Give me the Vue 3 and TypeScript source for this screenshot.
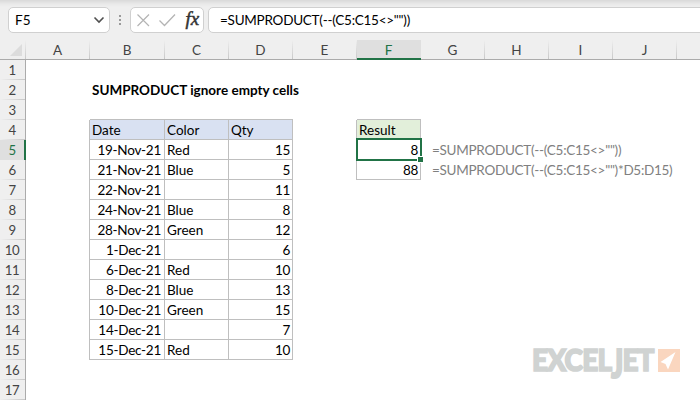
<script setup lang="ts">
interface Cell {
  text?: string
  kind: string
}

const columns: string[] = ['A', 'B', 'C', 'D', 'E', 'F', 'G', 'H', 'I', 'J', '']
const rowCount = 17
const activeColumn = 'F'
const activeRow = 5

const records: [string, string, number][] = [
  ['19-Nov-21', 'Red', 15],
  ['21-Nov-21', 'Blue', 5],
  ['22-Nov-21', '', 11],
  ['24-Nov-21', 'Blue', 8],
  ['28-Nov-21', 'Green', 12],
  ['1-Dec-21', '', 6],
  ['6-Dec-21', 'Red', 10],
  ['8-Dec-21', 'Blue', 13],
  ['10-Dec-21', 'Green', 15],
  ['14-Dec-21', '', 7],
  ['15-Dec-21', 'Red', 10],
]

const cells: Record<string, Cell> = {
  B2: { text: 'SUMPRODUCT ignore empty cells', kind: 'title' },
  A4: { kind: 'edge' },
  B3: { kind: 'rule' },
  C3: { kind: 'rule' },
  D3: { kind: 'rule' },
  F3: { kind: 'rule' },
  B4: { text: 'Date', kind: 'boxed head' },
  C4: { text: 'Color', kind: 'boxed head' },
  D4: { text: 'Qty', kind: 'boxed head' },
  E4: { kind: 'edge' },
  F4: { text: 'Result', kind: 'boxed head result' },
  E5: { kind: 'edge' },
  F5: { text: '8', kind: 'boxed number selected' },
  G5: { text: '=SUMPRODUCT(--(C5:C15<>""))', kind: 'note' },
  E6: { kind: 'edge' },
  F6: { text: '88', kind: 'boxed number' },
  G6: { text: '=SUMPRODUCT(--(C5:C15<>"")*D5:D15)', kind: 'note' },
}

records.forEach(([date, color, qty], i) => {
  const row = i + 5
  cells[`A${row}`] = { kind: 'edge' }
  cells[`B${row}`] = { text: date, kind: 'boxed date' }
  cells[`C${row}`] = { text: color, kind: 'boxed' }
  cells[`D${row}`] = { text: String(qty), kind: 'boxed number' }
})

const cellAt = (column: string, row: number): Cell => cells[`${column}${row}`] ?? { kind: '' }
</script>

<template>
  <div class="window">
    <div class="toolbar">
      <div class="field name-box">
        <span>F5</span>
        <svg width="12" height="8" viewBox="0 0 12 8"><path d="M1.500 1.500 6 6l4.500-4.500" fill="none" stroke="#505050" stroke-width="1.600" /></svg>
      </div>
      <div class="grip"><i></i><i></i><i></i></div>
      <div class="field actions">
        <svg width="72" height="24" viewBox="0 0 72 24">
          <path d="M6.500 6.500 18 18M18 6.500 6.500 18" fill="none" stroke="#b4b4b4" stroke-width="1.200" />
          <path d="M28.500 12.500 33.500 17.500 44 6.500" fill="none" stroke="#b4b4b4" stroke-width="1.300" />
          <text x="54.500" y="17" class="fx">fx</text>
        </svg>
      </div>
      <div class="field formula"><span>=SUMPRODUCT(--(C5:C15&lt;&gt;""))</span></div>
    </div>

    <div class="sheet">
      <div class="corner"><svg width="12" height="12" viewBox="0 0 12 12"><path d="M12 0v12H0z" fill="#dcdcdc" /></svg></div>
      <div v-for="column in columns" :key="column" class="column-label" :class="{ active: column === activeColumn }">{{ column }}</div>
      <template v-for="row in rowCount" :key="row">
        <div class="row-label" :class="{ active: row === activeRow }">{{ row }}</div>
        <div v-for="column in columns" :key="column" class="cell" :class="cellAt(column, row).kind">
          <span>{{ cellAt(column, row).text }}</span>
        </div>
      </template>
    </div>

    <div class="brand">
      <span class="wordmark">EXCEL<b>J</b>ET</span>
      <svg width="22" height="23" viewBox="0 0 22 23"><path d="M0 0h22v23H0z" fill="#fad6bf" /><path d="M17.500 3 2.500 13l5 2 2.500 5.500z" fill="#fff" /></svg>
    </div>
  </div>
</template>

<style>
body {
  margin: 0;
}
</style>

<style scoped>
.window {
  position: relative;
  width: 700px;
  height: 400px;
  overflow: hidden;
  background: #fff;
  font-family: Lato, "Liberation Sans", sans-serif;
  font-size: 13.500px;
  color: #000;
}
.toolbar {
  box-sizing: border-box;
  height: 40px;
  padding: 7px 0 7px 8px;
  display: flex;
  background: linear-gradient(#d9d9d9, #e9e9e9 4px, #efefef 7px);
}
.field {
  box-sizing: border-box;
  height: 26px;
  border: 1px solid #d0d0d0;
  border-radius: 5px;
  background: #fff;
  display: flex;
  align-items: center;
}
.name-box {
  width: 102px;
  padding: 0 4px 0 6px;
  justify-content: space-between;
}
.grip {
  width: 20px;
  display: flex;
  flex-direction: column;
  align-items: center;
  justify-content: center;
  gap: 2px;
}
.grip i {
  width: 2px;
  height: 2px;
  background: #9a9a9a;
}
.actions {
  width: 74px;
}
.fx {
  font: italic 19px "Liberation Serif", serif;
  fill: #333;
  stroke: #333;
  stroke-width: 0.500px;
}
.formula {
  flex: 1;
  margin: 0 -8px 0 4px;
  padding-left: 11px;
  white-space: pre;
  letter-spacing: -0.250px;
}
.sheet {
  display: grid;
  grid-template-columns: 26px 64px 75px repeat(9, 64px);
  grid-template-rows: 20px repeat(17, 20px);
}
.corner,
.column-label,
.row-label {
  box-sizing: border-box;
  background: #efefef;
  color: #444;
  display: flex;
  justify-content: center;
  align-items: center;
}
.corner {
  border-bottom: 1px solid #ababab;
  justify-content: flex-end;
  padding-right: 4px;
  background: linear-gradient(#efefef, #c8c8c8) right / 1px 100% no-repeat #efefef;
}
.column-label {
  border-bottom: 1px solid #ababab;
  padding-right: 1px;
  background: linear-gradient(#efefef, #c8c8c8) right / 1px 100% no-repeat #efefef;
}
.column-label.active {
  background: #dfdfdf;
  color: #217346;
  border-bottom: 2px solid #217346;
  padding-top: 1px;
}
.row-label {
  border-right: 1px solid #ababab;
  padding: 0 1px 1px 0;
  font-size: 13.200px;
  letter-spacing: -0.500px;
  background: linear-gradient(90deg, #efefef, #c8c8c8) bottom / 100% 1px no-repeat #efefef;
}
.row-label.active {
  background: #dfdfdf;
  color: #217346;
  border-right: 2px solid #217346;
  padding-right: 0;
}
.cell {
  box-sizing: border-box;
  min-width: 0;
  padding: 0 2px;
  display: flex;
  align-items: center;
  white-space: pre;
  border: 0 solid #bfbfbf;
}
.edge {
  border-right-width: 1px;
}
.rule {
  border-bottom-width: 1px;
}
.boxed {
  border-width: 0 1px 1px 0;
}
.head {
  background: #d9e1f2;
}
.result {
  background: #e2efda;
}
.date,
.number {
  justify-content: flex-end;
}
.date {
  padding-right: 3px;
  letter-spacing: -0.260px;
}
.number {
  letter-spacing: -0.300px;
}
.title {
  font-weight: bold;
}
.note {
  padding-left: 11px;
  color: #808080;
  letter-spacing: -0.280px;
}
.selected {
  position: relative;
}
.selected::before {
  content: "";
  position: absolute;
  inset: -2px -2px -2px -1px;
  border: 2px solid #217346;
}
.selected::after {
  content: "";
  position: absolute;
  right: -3px;
  bottom: -3px;
  width: 5px;
  height: 5px;
  background: #217346;
  box-shadow: 0 0 0 1px #fff;
}
.brand {
  position: absolute;
  left: 532px;
  top: 349px;
  height: 23px;
  display: flex;
  gap: 3px;
}
.wordmark {
  width: 123px;
  font-size: 31px;
  line-height: 21px;
  font-weight: 900;
  color: #d0d3d2;
  white-space: nowrap;
  letter-spacing: -0.900px;
  -webkit-text-stroke: 1.700px #d0d3d2;
  transform: scaleX(0.900);
  transform-origin: 0 0;
}
.wordmark b {
  display: inline-block;
  font-weight: 900;
  transform: scaleY(1.300);
  transform-origin: 0 0;
}
</style>
